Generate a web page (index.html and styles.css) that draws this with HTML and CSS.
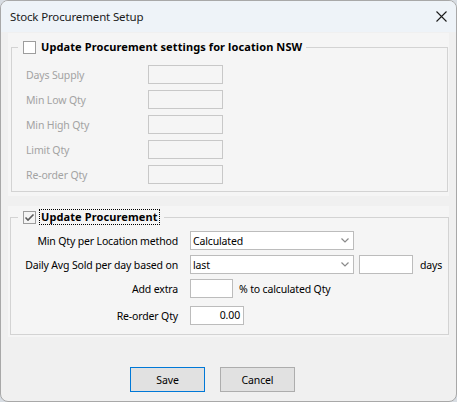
FILE: index.html
```html
<!DOCTYPE html>
<html lang="en">

<head>
    <meta charset="UTF-8">
    <title>Stock Procurement Setup</title>
    <link rel="stylesheet" href="styles.css">
</head>

<body>

    <div class="window">
        <div class="titlebar">
            <span class="title">Stock Procurement Setup</span>
            <span class="close" title="Close">
                <svg width="11" height="11" viewBox="0 0 11 11">
                    <path d="M0.5 0.5 L10.5 10.5 M10.5 0.5 L0.5 10.5" stroke="#1b1b1b" stroke-width="1.1" fill="none" />
                </svg>
            </span>
        </div>

        <div class="content">
            <!-- location specific settings, disabled until ticked -->
            <div class="panel">
                <fieldset class="group group-location">
                    <legend>
                        <span class="check"></span>
                        <b class="legend-text">Update Procurement settings for location NSW</b>
                    </legend>
                    <div class="fields disabled">
                        <label>Days Supply</label><span class="textbox"></span>
                        <label>Min Low Qty</label><span class="textbox"></span>
                        <label>Min High Qty</label><span class="textbox"></span>
                        <label>Limit Qty</label><span class="textbox"></span>
                        <label>Re-order Qty</label><span class="textbox"></span>
                    </div>
                </fieldset>
            </div>

            <div class="panel panel-second">
                <fieldset class="group group-procurement">
                    <legend>
                        <span class="check checked">
                            <svg width="11" height="11" viewBox="0 0 11 11">
                                <path d="M1.5 5.5 L4 8 L9.5 2.5" stroke="#5a5a5a" stroke-width="1.6" fill="none" />
                            </svg>
                        </span>
                        <b class="legend-text focused">Update Procurement</b>
                    </legend>
                    <div class="rows">
                        <div class="row">
                            <label>Min Qty per Location method</label>
                            <div class="select">
                                <span>Calculated</span>
                                <svg width="8" height="5" viewBox="0 0 8 5">
                                    <path d="M0.5 0.5 L4 4 L7.5 0.5" stroke="#8a8a8a" stroke-width="1.2" fill="none" />
                                </svg>
                            </div>
                        </div>
                        <div class="row">
                            <label>Daily Avg Sold per day based on</label>
                            <div class="select">
                                <span>last</span>
                                <svg width="8" height="5" viewBox="0 0 8 5">
                                    <path d="M0.5 0.5 L4 4 L7.5 0.5" stroke="#8a8a8a" stroke-width="1.2" fill="none" />
                                </svg>
                            </div>
                            <span class="textbox days"></span>
                            <span class="unit unit-days">days</span>
                        </div>
                        <div class="row">
                            <label>Add extra</label>
                            <span class="textbox extra"></span>
                            <span class="unit">% to calculated Qty</span>
                        </div>
                        <div class="row row-spaced">
                            <label>Re-order Qty</label>
                            <span class="textbox qty">0.00</span>
                        </div>
                    </div>
                </fieldset>
            </div>

            <div class="actions">
                <button class="btn btn-default">Save</button>
                <button class="btn">Cancel</button>
            </div>
        </div>
    </div>

</body>

</html>
```

FILE: styles.css
```css
body {
    margin: 0;
    background: #d8dde3;
    font-family: 'Noto Sans', 'Open Sans', sans-serif;
    font-size: 10.5px;
    letter-spacing: -0.15px;
    color: #000;
}

.window {
    width: 457px;
    height: 402px;
    box-sizing: border-box;
    border: 1px solid #a8a8a8;
    border-radius: 8px;
    background: #f0f0f0;
    overflow: hidden;
    display: flex;
    flex-direction: column;
}

.titlebar {
    height: 31px;
    flex-shrink: 0;
    background: #eef3f8;
    display: flex;
    align-items: center;
    padding: 0 9px;
}

.title {
    flex: 1;
    font-size: 11.5px;
    color: #1b1b1b;
}

.close {
    display: flex;
}

.content {
    padding: 1px 7px 0 7px;
}

.panel {
    display: flow-root;
    background: #f5f5f5;
}

.panel-second {
    margin-top: 10px;
}

.group {
    border: 1px solid #d3d3d3;
    padding: 0;
    min-width: 0;
}

.group-location {
    margin: 6px 1px 4px 3px;
}

.group-procurement {
    margin: 3px 0 2px 2px;
}

legend {
    margin-left: 6px;
    padding: 0 4px 0 5px;
    height: 16px;
    display: flex;
    align-items: center;
    gap: 5px;
}

.group-procurement legend {
    margin-left: 7px;
    gap: 3px;
}

.check {
    width: 13px;
    height: 13px;
    box-sizing: border-box;
    border: 1px solid #9d9d9d;
    background: #fff;
    display: flex;
    align-items: center;
    justify-content: center;
}

.check.checked {
    background: #f4f4f4;
}

.legend-text {
    font-weight: 700;
    font-size: 11px;
    letter-spacing: 0.1px;
    line-height: 14px;
}

.legend-text.focused {
    border: 1px dotted #000;
    padding: 0 1px;
}

.fields {
    display: grid;
    grid-template-columns: 122px 75px;
    grid-auto-rows: 19px;
    row-gap: 6px;
    padding: 10px 0 7px 14px;
    align-items: center;
}

.fields.disabled label {
    color: #a3a3a3;
}

.textbox {
    box-sizing: border-box;
    height: 19px;
    border: 1px solid #bcbcbc;
    background: #fff;
    display: block;
}

.fields.disabled .textbox {
    border-color: #c8c8c8;
    background: #f5f5f5;
}

.rows {
    padding: 6px 0 9px 0;
}

.row {
    display: flex;
    align-items: center;
    height: 19px;
}

.row+.row {
    margin-top: 5px;
}

.row.row-spaced {
    margin-top: 8px;
}

.row label {
    width: 167px;
    text-align: right;
    margin-right: 12px;
    flex-shrink: 0;
}

.select {
    box-sizing: border-box;
    width: 164px;
    height: 19px;
    border: 1px solid #bcbcbc;
    background: #fff;
    display: flex;
    align-items: center;
    justify-content: space-between;
    padding: 0 4px 0 2px;
}

.textbox.days {
    width: 54px;
    margin-left: 5px;
}

.textbox.extra {
    width: 43px;
}

.textbox.qty {
    width: 54px;
    text-align: right;
    padding-right: 3px;
    line-height: 17px;
}

.unit {
    margin-left: 6px;
}

.unit-days {
    margin-left: 7px;
}

.actions {
    display: flex;
    gap: 15px;
    padding: 30px 0 0 122px;
}

.btn {
    width: 75px;
    height: 25px;
    border: 1px solid #adadad;
    background: #e1e1e1;
    font-family: inherit;
    font-size: 10.5px;
    letter-spacing: inherit;
    color: #000;
    padding: 0;
}

.btn-default {
    border-color: #0078d7;
}
```
